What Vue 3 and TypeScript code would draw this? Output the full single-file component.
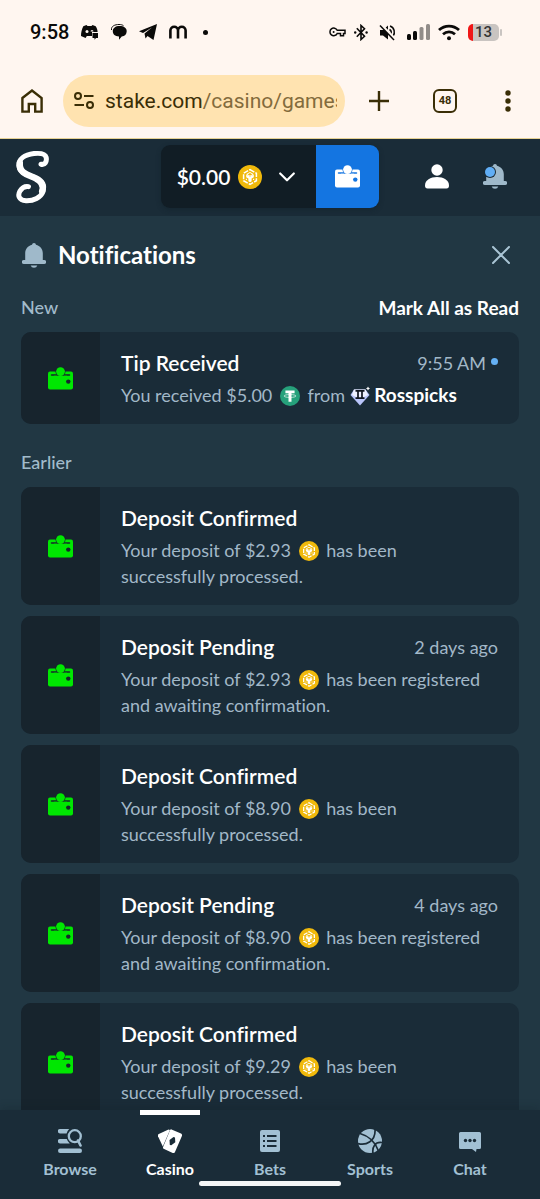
<script setup lang="ts">
import { h, type FunctionalComponent } from 'vue'

type Coin = 'bnb' | 'usdt'

interface Notice {
  title: string
  time?: string
  unread?: boolean
  before: string
  coin: Coin
  after: string
  sender?: string
}

interface NavItem {
  label: string
  icon: 'browse' | 'casino' | 'bets' | 'sports' | 'chat'
  active?: boolean
}

const fresh: Notice[] = [
  { title: 'Tip Received', time: '9:55 AM', unread: true, before: 'You received $5.00', coin: 'usdt', after: 'from', sender: 'Rosspicks' },
]

const confirmed = (amount: string): Notice => ({
  title: 'Deposit Confirmed', before: `Your deposit of ${amount}`, coin: 'bnb', after: 'has been successfully processed.',
})
const pending = (amount: string, time: string): Notice => ({
  title: 'Deposit Pending', time, before: `Your deposit of ${amount}`, coin: 'bnb', after: 'has been registered and awaiting confirmation.',
})

const earlier: Notice[] = [
  confirmed('$2.93'),
  pending('$2.93', '2 days ago'),
  confirmed('$8.90'),
  pending('$8.90', '4 days ago'),
  confirmed('$9.29'),
]

const groups = [
  { name: 'New', items: fresh, action: 'Mark All as Read' },
  { name: 'Earlier', items: earlier, action: '' },
]

const nav: NavItem[] = [
  { label: 'Browse', icon: 'browse' },
  { label: 'Casino', icon: 'casino', active: true },
  { label: 'Bets', icon: 'bets' },
  { label: 'Sports', icon: 'sports' },
  { label: 'Chat', icon: 'chat' },
]

const WalletIcon: FunctionalComponent<{ cut: string }> = (props) =>
  h('svg', { viewBox: '0 0 25 23', width: 25, height: 23, 'aria-hidden': 'true' }, [
    h('rect', { x: 0, y: 4.5, width: 25, height: 18, rx: 2, fill: 'currentColor' }),
    h('path', { d: 'M3.500 8H21.500', stroke: props.cut, 'stroke-width': 1.5, 'stroke-linecap': 'round' }),
    h('circle', { cx: 12.5, cy: 4.6, r: 5, fill: props.cut }),
    h('path', { d: 'M6 8.750h13v3H6Z', fill: 'currentColor' }),
    h('circle', { cx: 12.5, cy: 4.6, r: 4.4, fill: 'currentColor' }),
    h('circle', { cx: 20.3, cy: 14.6, r: 2.2, fill: props.cut }),
  ])
WalletIcon.props = ['cut']

const BellIcon: FunctionalComponent = () =>
  h('svg', { viewBox: '0 0 24 25', width: 24, height: 25, 'aria-hidden': 'true', fill: 'currentColor' }, [
    h('path', { d: 'M12 0a2 2 0 0 1 2 1.800c4 .9 6.800 4.400 6.800 8.500V17h1.400a1.800 1.800 0 0 1 0 4H1.800a1.800 1.800 0 0 1 0-4H3.200v-6.700C3.200 6.200 6 2.700 10 1.800A2 2 0 0 1 12 0Z' }),
    h('path', { d: 'M8.700 22.400h6.600a3.400 3 0 0 1-6.600 0Z' }),
  ])

const BnbIcon: FunctionalComponent = () =>
  h('svg', { viewBox: '0 0 24 24', 'aria-hidden': 'true', fill: 'none' }, [
    h('circle', { cx: 12, cy: 12, r: 12, fill: '#f0b90b' }),
    h('path', { d: 'M12 4.600 18.400 8.300V15.700L12 19.400 5.600 15.700V8.300Z', stroke: '#fff', 'stroke-width': 1.5, 'stroke-dasharray': '5 1.200' }),
    h('path', { d: 'M8.800 9.300 12 7.500l3.200 1.800L12 11.200Z', stroke: '#fff', 'stroke-width': 1 }),
    h('path', { d: 'M8.200 9.600 12 11.800l3.800-2.200v2.600l-2.200 1.300v2.800L12 17.200l-1.600-.9v-2.800L8.200 12.200Z', fill: '#fff' }),
    h('path', { d: 'M8.400 13.800v1.300M15.600 13.800v1.300', stroke: '#fff', 'stroke-width': 1.1 }),
  ])

const TetherIcon: FunctionalComponent = () =>
  h('svg', { viewBox: '0 0 24 24', 'aria-hidden': 'true', fill: 'none' }, [
    h('circle', { cx: 12, cy: 12, r: 12, fill: '#26a17b' }),
    h('path', { d: 'M6.500 5.500h11v3.300h-3.700V19h-3.600V8.800H6.500Z', fill: '#fff' }),
    h('ellipse', { cx: 12, cy: 12, rx: 7.2, ry: 1.7, stroke: '#fff', 'stroke-width': 0.8 }),
  ])
</script>

<template>
  <div class="phone">
    <header class="system">
      <div class="status">
        <div class="status-left">
          <time class="clock">9:58</time>
          <svg width="18" height="16" viewBox="0 0 18 16" aria-hidden="true">
            <path d="M5.500 1 6.500 2h4L11.500 1l3.200 1.200c1.300 2 1.900 4 1.900 5.800H11v4H5.800l-1.200 2L0 12C0 8.500.8 5 2.300 2.200Z" fill="#0b0a09" />
            <circle cx="6" cy="7.500" r="1.500" fill="#fff6f0" />
            <path d="M9.500 7.500a1.500 1.500 0 0 1 3 0" fill="#fff6f0" />
            <path d="M11.500 9H17v5h-2l-1.500 1.800V14h-2Z" fill="#0b0a09" />
          </svg>
          <svg width="16" height="16" viewBox="0 0 16 16" aria-hidden="true">
            <path d="M.5 6C0 2 4 .5 8 .5c2 0 3.500.4 4.500 1.200" fill="none" stroke="#0b0a09" />
            <path d="M8.500 2c4.500 0 7.200 2 7.200 5.300 0 3-2 4.900-5 5.300L8 15.800v-3.200C4 12.300 1.800 10.300 1.800 7.300 1.800 4 4.500 2 8.500 2Z" fill="#0b0a09" />
          </svg>
          <svg width="18" height="16" viewBox="0 0 18 16" aria-hidden="true">
            <path d="M18 0 14.500 16 8.500 12 6.500 14.500 5.500 9.500 13 3.500 4 9 0 7.200Z" fill="#0b0a09" />
          </svg>
          <svg width="18" height="14" viewBox="0 0 18 14" fill="none" stroke="#0b0a09" stroke-width="2.600" aria-hidden="true">
            <path d="M1.400 13.500V5.500a3.800 3.800 0 0 1 7.600 0v8M9 5.500a3.800 3.800 0 0 1 7.600 0v8" />
          </svg>
          <span class="more-dot"></span>
        </div>
        <div class="status-right">
          <svg width="17" height="10" viewBox="0 0 17 10" fill="none" stroke="#0b0a09" stroke-width="1.500" aria-hidden="true">
            <path d="M8.200 3.300H16V6.500H14.500V8.700H11.500V6.500H8.200A3.800 3.800 0 1 1 8.200 3.300Z" />
            <circle cx="4.600" cy="4.900" r="1" fill="#0b0a09" stroke="none" />
          </svg>
          <svg width="14" height="17" viewBox="0 0 14 17" fill="none" stroke="#0b0a09" stroke-width="1.600" aria-hidden="true">
            <path d="M2.800 4.300 10.500 12.300 7 15.500V1.500l3.500 3.200L2.800 12.700" />
            <circle cx="1.200" cy="8.500" r="1.200" fill="#0b0a09" stroke="none" />
            <circle cx="12.600" cy="8.500" r="1.200" fill="#0b0a09" stroke="none" />
          </svg>
          <svg class="mute" width="17" height="17" viewBox="0 0 17 17" fill="none" stroke="#0b0a09" stroke-width="1.500" aria-hidden="true">
            <path d="M1 6h3l5-4.500v14L4 11.500H1Z" fill="#0b0a09" stroke="none" />
            <path d="M10.500 5.500c1.500.8 2 3 1.200 4.800M11 2c4.500 1.500 5.500 7 3 10.300" />
            <path d="M2 .5 16 15" stroke="#fff6f0" stroke-width="2.600" />
            <path d="M1 1.500 15 16" />
          </svg>
          <svg width="23" height="16" viewBox="0 0 23 16" aria-hidden="true">
            <rect x="0" y="10" width="4" height="6" rx="1.500" fill="#0b0a09" />
            <rect x="6" y="7" width="4" height="9" rx="1.500" fill="#0b0a09" />
            <rect x="12.500" y="3" width="4" height="13" rx="1.500" fill="#918c89" />
            <rect x="19" y="0" width="4" height="16" rx="1.500" fill="#918c89" />
          </svg>
          <svg width="22" height="17" viewBox="0 0 22 17" fill="none" stroke="#0b0a09" stroke-width="2.800" aria-hidden="true">
            <path d="M1 6c5.700-5.300 14.300-5.300 20 0M5 10.200c3.500-3 8.500-3 12 0" />
            <circle cx="11" cy="14.200" r="2" fill="#0b0a09" stroke="none" />
          </svg>
          <span class="battery">13</span>
        </div>
      </div>

      <div class="browser">
        <button class="plain" type="button" aria-label="Home">
          <svg width="22" height="24" viewBox="0 0 22 24" fill="none" stroke="#3a2e06" stroke-width="2.400" aria-hidden="true">
            <path d="M1.400 9 11 1.600 20.600 9V22.600H14.200V15H7.800V22.600H1.400Z" />
          </svg>
        </button>
        <button class="address" type="button">
          <svg width="20" height="17" viewBox="0 0 20 17" fill="none" stroke="#3a2e06" stroke-width="2" aria-hidden="true">
            <circle cx="4" cy="4" r="3" /><path d="M10 4H19.500M.5 13H10" /><circle cx="16" cy="13" r="3" />
          </svg>
          <span class="url">stake.com<span class="path">/casino/games</span></span>
        </button>
        <button class="plain" type="button" aria-label="New tab">
          <svg width="20" height="20" viewBox="0 0 20 20" stroke="#3a2e06" stroke-width="2.400" aria-hidden="true">
            <path d="M10 0V20M0 10H20" />
          </svg>
        </button>
        <button class="tabs" type="button" aria-label="48 open tabs">48</button>
        <button class="plain" type="button" aria-label="Browser menu">
          <svg width="6" height="22" viewBox="0 0 6 22" fill="#3a2e06" aria-hidden="true">
            <circle cx="3" cy="3" r="2.700" /><circle cx="3" cy="11" r="2.700" /><circle cx="3" cy="19" r="2.700" />
          </svg>
        </button>
      </div>
    </header>

    <div class="site-bar">
      <a class="logo" href="#" aria-label="Stake">
        <svg width="36" height="54" viewBox="0 0 36 54" fill="none" stroke="#fff" stroke-linecap="round" aria-hidden="true">
          <path stroke-width="5" d="M27 14.200C31 15.200 33 11.500 32.200 7.500C31 3 25.500 3 20 3.600C10 4.800 4.700 9.500 4.900 15.500C5.200 23.500 14.500 24.800 21.500 28C28 31 30.500 35 29 41.500C27 47.500 19.500 51 12 50.700C4.500 50.400 3.600 45 6 41C8 37.800 11 36 14.500 36.600" />
          <path stroke-width="6.500" d="M5.800 13C4.600 24.500 17 25.500 22 28.500C28 31.500 30 35.500 28.200 41" />
        </svg>
      </a>
      <div class="purse">
        <button class="balance" type="button">
          <span>$0.00</span>
          <BnbIcon class="coin-large" />
          <svg width="16" height="10" viewBox="0 0 16 10" fill="none" stroke="#fff" stroke-width="2.200" stroke-linecap="round" stroke-linejoin="round" aria-hidden="true">
            <path d="M1.200 1.500 8 8.300 14.800 1.500" />
          </svg>
        </button>
        <button class="wallet" type="button" aria-label="Wallet"><WalletIcon cut="#1475e1" /></button>
      </div>
      <div class="account">
        <button class="plain" type="button" aria-label="Profile">
          <svg width="24" height="25" viewBox="0 0 24 25" fill="#fff" aria-hidden="true">
            <circle cx="12" cy="6" r="5.700" />
            <path d="M0 21.500C0 16 5.500 13 12 13s12 3 12 8.500c0 2-.8 3-2.500 3h-19C.8 24.500 0 23.500 0 21.500Z" />
          </svg>
        </button>
        <button class="plain bell" type="button" aria-label="Notifications"><BellIcon /><span class="alert"></span></button>
      </div>
    </div>

    <main class="panel">
      <div class="panel-head">
        <BellIcon class="head-bell" />
        <h1>Notifications</h1>
        <button class="plain" type="button" aria-label="Close">
          <svg width="18" height="18" viewBox="0 0 18 18" stroke="#a9c4d4" stroke-width="2" stroke-linecap="round" aria-hidden="true">
            <path d="M1 1 17 17M17 1 1 17" />
          </svg>
        </button>
      </div>

      <section v-for="group in groups" :key="group.name" class="group">
        <div class="group-head">
          <h2>{{ group.name }}</h2>
          <button v-if="group.action" class="plain mark" type="button">{{ group.action }}</button>
        </div>
        <article v-for="(item, i) in group.items" :key="i" class="card">
          <div class="tile"><WalletIcon cut="#17242d" /></div>
          <div class="content">
            <div class="title-row">
              <h3>{{ item.title }}</h3>
              <time v-if="item.time">{{ item.time }}<span v-if="item.unread" class="unread"></span></time>
            </div>
            <p>
              {{ item.before }}
              <BnbIcon v-if="item.coin === 'bnb'" class="coin" />
              <TetherIcon v-else class="coin" />
              {{ item.after }}
              <template v-if="item.sender">
                <svg class="gem" viewBox="0 0 20 20" aria-hidden="true">
                  <path d="M4 3.500h11.500L19.500 9 10 19.500.5 9Z" fill="#b9c5fa" />
                  <path d="M4 3.500h11.500L18 9 10 13 2 9Z" fill="#eef1ff" />
                  <path d="M5.500 4.800h9M5.500 12.200h9M8 4.800V12.200M12 4.800V12.200" stroke="#10151f" stroke-width="1.700" />
                  <path d="m18 .5.700 1.300 1.300.7-1.300.7-.7 1.300-.7-1.300-1.300-.7 1.300-.7Z" fill="#fff" />
                </svg>
                {{ ' ' }}<strong>{{ item.sender }}</strong>
              </template>
            </p>
          </div>
        </article>
      </section>
    </main>

    <nav class="bottom">
      <a v-for="item in nav" :key="item.label" href="#" :class="{ active: item.active }" :aria-current="item.active ? 'page' : undefined">
        <svg width="24" height="24" viewBox="0 0 24 24" fill="currentColor" aria-hidden="true">
          <template v-if="item.icon === 'browse'">
            <path d="M2 0h9.200A9.500 9.500 0 0 0 8.600 4.400H2A2.200 2.200 0 0 1 2 0ZM2 10h6.800a9.500 9.500 0 0 0 3 4.400H2A2.200 2.200 0 0 1 2 10Z" />
            <rect y="19.500" width="24" height="4.500" rx="2.200" />
            <circle cx="16.800" cy="7.200" r="6" fill="none" stroke="currentColor" stroke-width="2.300" />
            <path d="M20 11.500 22.500 16.500" stroke="currentColor" stroke-width="2.600" stroke-linecap="round" />
          </template>
          <template v-else-if="item.icon === 'casino'">
            <path d="M.8 5 10.500.6 12 .9 4.800 17.500 0 7.200C-.3 6.300 0 5.400.8 5Z" />
            <path fill-rule="evenodd" d="M13.500.4 23 4.600c1 .5 1.300 1.400.9 2.300L17 23c-.4.900-1.400 1.300-2.300.9L5.600 19.800c-.7-.3-.8-1-.5-1.800L12 1.300c.3-.8.800-1.200 1.500-.9ZM15.500 8l-4 3 .3 5 1.500.3 4-3-.3-4.700Z" />
          </template>
          <template v-else-if="item.icon === 'bets'">
            <rect x="2" y="1" width="20" height="22" rx="2" />
            <path d="M9 7h9.500M9 12h9.500M9 17h9.500M5 7h2M5 12h2M5 17h2" stroke="#1a2c38" stroke-width="1.800" />
          </template>
          <template v-else-if="item.icon === 'sports'">
            <circle cx="12" cy="12" r="12" />
            <path d="M0 14.500C8 16.500 18 12.500 17 0M2 4.500C9 6.500 17 11.500 20.500 22M24 13.500c-7-1-10 4.500-9 11" fill="none" stroke="#1a2c38" stroke-width="1.700" />
          </template>
          <template v-else>
            <path d="M2.500 3h19a1.500 1.500 0 0 1 1.500 1.500v14a1.500 1.500 0 0 1-1.500 1.500H18.500l-.5 3-4-3H2.500A1.500 1.500 0 0 1 1 18.500v-14A1.500 1.500 0 0 1 2.500 3Z" />
            <g fill="#1a2c38"><circle cx="7.500" cy="11.500" r="1.700" /><circle cx="12" cy="11.500" r="1.700" /><circle cx="16.500" cy="11.500" r="1.700" /></g>
          </template>
        </svg>
        <span>{{ item.label }}</span>
      </a>
      <span class="gesture"></span>
    </nav>
  </div>
</template>

<style>
body { margin: 0; background: #1a2c38; }
</style>

<style scoped>
* { box-sizing: border-box; }
svg { display: block; flex: none; }
button { font: inherit; border: 0; padding: 0; color: inherit; cursor: pointer; }
h1, h2, h3, p { margin: 0; }
.plain { background: none; display: flex; }

.phone {
  height: 100vh;
  display: flex;
  flex-direction: column;
  overflow: hidden;
  font-family: Lato, "Liberation Sans", sans-serif;
  font-variant-ligatures: none;
  color: #fff;
  background: #213743;
}

.system { background: #fff6f0; border-bottom: 1px solid #e6d193; font-family: Roboto, sans-serif; padding-bottom: 12px; }
.status { display: flex; justify-content: space-between; align-items: center; height: 64px; padding: 0 41px 0 30px; color: #0b0a09; }
.status-left { display: flex; align-items: center; gap: 12px; }
.clock { font-size: 20px; font-weight: 500; }
.more-dot { width: 5px; height: 5px; margin-left: 4px; border-radius: 50%; background: #0b0a09; }
.status-right { display: flex; align-items: center; gap: 8px; }
.mute { margin: 0 3px; }
.battery {
  position: relative;
  width: 31px;
  height: 17px;
  border-radius: 5px;
  font-size: 15px;
  line-height: 17px;
  font-weight: 500;
  text-align: center;
  color: #333;
  background: linear-gradient(90deg, #f01717 5px, #c9c4c1 5px);
}
.battery::after { content: ""; position: absolute; right: -3px; top: 5px; width: 2px; height: 7px; border-radius: 1px; background: #c9c4c1; }

.browser { display: flex; align-items: center; height: 62px; padding: 11px 29px 0 21px; color: #3a2e06; }
.address {
  flex: 1;
  min-width: 0;
  display: flex;
  align-items: center;
  gap: 11px;
  height: 52px;
  margin: 0 24px 0 20px;
  padding: 0 8px 0 11px;
  border-radius: 26px;
  color: #3a2e06;
  background: #ffe3b0;
}
.url { flex: 1; min-width: 0; overflow: hidden; white-space: nowrap; text-align: left; font-size: 21px; line-height: 30px; }
.path { color: #836b3c; }
.tabs { width: 24px; height: 24px; margin: 0 48px 0 44px; border: 2px solid #3a2e06; border-radius: 6px; background: none; font-size: 11px; font-weight: 700; line-height: 20px; }

.site-bar { display: flex; align-items: center; justify-content: space-between; height: 77px; padding: 0 33px 2px 14px; background: #1a2c38; }
.account { display: flex; gap: 34px; }
.purse { display: flex; height: 63px; margin-left: 65px; border-radius: 9px; overflow: hidden; box-shadow: 0 2px 5px #0f1d2566; }
.balance { display: flex; align-items: center; padding: 0 21px 0 16px; background: #111d25; font-size: 21px; font-weight: 600; }
.coin-large { width: 24px; height: 24px; margin: 0 17px 0 8px; }
.wallet { display: grid; place-items: center; width: 63px; background: #1475e1; }
.bell { position: relative; color: #9fb9ca; }
.alert { position: absolute; left: 2px; top: 3px; width: 10px; height: 10px; border-radius: 50%; background: #60aef6; box-shadow: 0 0 0 1px #1a2c38; }

.panel { flex: 1; min-height: 0; overflow-y: auto; scrollbar-width: none; padding: 0 21px; }
.panel-head { display: flex; align-items: center; height: 78px; padding-right: 9px; }
.head-bell { margin: 0 12px 0 1px; color: #9fb9ca; }
h1 { flex: 1; font-size: 24px; line-height: 30px; font-weight: 700; }
.group { display: flex; flex-direction: column; gap: 11px; margin-bottom: 25px; }
.group-head { display: flex; justify-content: space-between; align-items: center; height: 27px; }
.group-head h2 { font-size: 18px; line-height: 27px; font-weight: 500; color: #a2bbcb; }
.mark { font-size: 19px; line-height: 27px; font-weight: 700; }

.card { display: flex; border-radius: 10px; overflow: hidden; background: #1a2c38; }
.tile { display: grid; place-items: center; width: 79px; color: #00e701; background: #17242d; }
.content { flex: 1; min-width: 0; padding: 18px 21px 16px; font-size: 18px; line-height: 26px; color: #a2b8c8; }
.content p { padding-right: 10px; }
.title-row { display: flex; justify-content: space-between; margin-bottom: 6px; }
h3 { font-size: 21px; line-height: 26px; font-weight: 600; color: #fff; }
time { display: flex; }
.unread { width: 7px; height: 7px; margin: 8px 0 0 5px; border-radius: 50%; background: #65b1f5; }
.coin, .gem { display: inline-block; width: 20px; height: 20px; vertical-align: -4px; }
.coin { margin: 0 3px; }
strong { font-size: 19px; font-weight: 700; line-height: 20px; color: #fff; }

.bottom { position: relative; display: flex; height: 89px; padding: 0 20px; background: #1a2c38; box-shadow: 0 -2px 8px #0f1d2544; }
.bottom a {
  flex: 1;
  display: flex;
  flex-direction: column;
  align-items: center;
  gap: 6px;
  padding-top: 19px;
  font-size: 16px;
  line-height: 20px;
  font-weight: 700;
  text-decoration: none;
  color: #a2c0d3;
}
.bottom .active { color: #fff; background: linear-gradient(#fff, #fff) top center / 60px 5px no-repeat; }
.gesture { position: absolute; left: 50%; bottom: 13px; width: 142px; height: 5px; margin-left: -71px; border-radius: 3px; background: #f4f6f7; }
</style>
